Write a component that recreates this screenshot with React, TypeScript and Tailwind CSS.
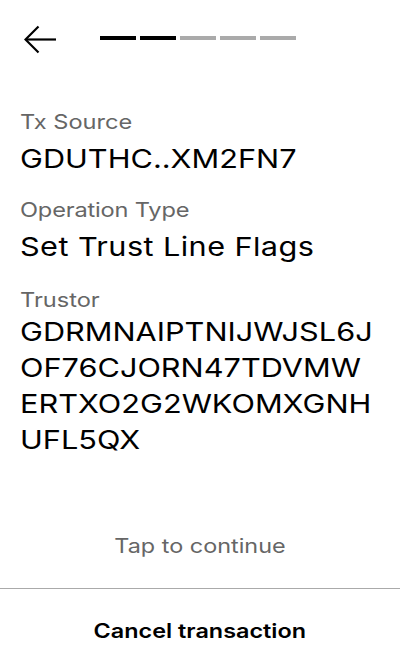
import React from 'react';

const trustorLines = ['GDRMNAIPTNIJWJSL6J', 'OF76CJORN47TDVMW', 'ERTXO2G2WKOMXGNH', 'UFL5QX'];

const steps = [true, true, false, false, false];

export default function App() {
  return (
    <div
      className="flex flex-col w-[400px] h-[672px] bg-white text-black overflow-hidden"
      style={{ fontFamily: 'Inter, "Noto Sans", sans-serif' }}
    >
      {/* Header: back arrow + progress */}
      <div className="flex items-start pt-[23px] pl-6">
        <svg width="32" height="32" viewBox="0 0 32 32" fill="none" stroke="black" strokeWidth="2.2">
          <path d="M32 16.5H2" />
          <path d="M14.5 3.5L1.5 16.5L14.5 29.5" />
        </svg>
        <div className="flex gap-1 ml-[44px] mt-[13px]">
          {steps.map((done, i) => (
            <div key={i} className={`w-9 h-1 ${done ? 'bg-black' : 'bg-[#aaaaaa]'}`} />
          ))}
        </div>
      </div>

      {/* Details (wide text face) */}
      <div className="px-5 mt-[53px]">
        <div className="flex flex-col origin-left scale-x-[1.18]">
          <div className="text-[20px] leading-[28px] text-[#666666]">Tx Source</div>
          <div className="text-[26px] leading-[36px] mt-[5px]">GDUTHC..XM2FN7</div>
          <div className="text-[20px] leading-[28px] text-[#666666] mt-[19px] tracking-[-0.15px]">Operation Type</div>
          <div className="text-[26px] leading-[36px] mt-[5px] tracking-[0.35px]">Set Trust Line Flags</div>
          <div className="text-[20px] leading-[28px] text-[#666666] mt-[21px]">Trustor</div>
          <div className="text-[26px] leading-[36px]">
            {trustorLines.map((line) => (
              <div key={line}>{line}</div>
            ))}
          </div>
        </div>
      </div>

      <div className="flex-1" />

      {/* Footer */}
      <div className="text-center text-[20px] leading-[28px] text-[#666666] mb-[28px] scale-x-[1.17]">
        Tap to continue
      </div>
      <div className="border-t border-[#aaaaaa] h-[84px] flex items-center justify-center">
        <span className="text-[20px] font-semibold scale-x-[1.17]">Cancel transaction</span>
      </div>
    </div>
  );
}
